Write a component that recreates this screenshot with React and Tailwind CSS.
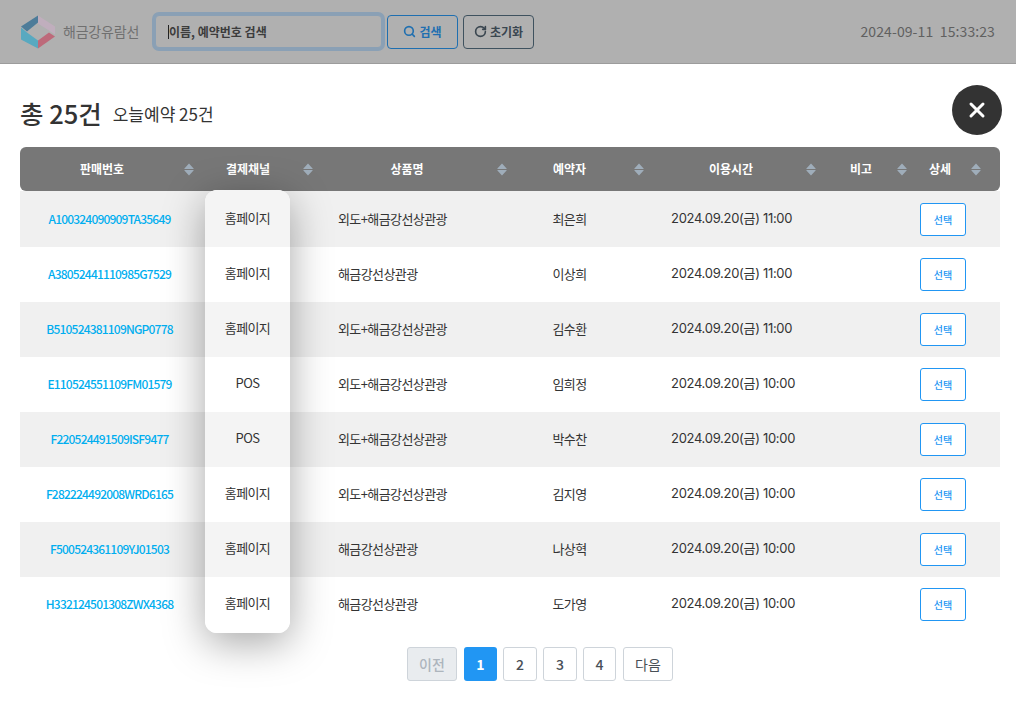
import React from "react";
import { X, Search, RotateCw } from "lucide-react";

const rows = [
  { no: "A100324090909TA35649", channel: "홈페이지", product: "외도+해금강선상관광", name: "최은희", time: "2024.09.20(금) 11:00" },
  { no: "A38052441110985G7529", channel: "홈페이지", product: "해금강선상관광", name: "이상희", time: "2024.09.20(금) 11:00" },
  { no: "B510524381109NGP0778", channel: "홈페이지", product: "외도+해금강선상관광", name: "김수환", time: "2024.09.20(금) 11:00" },
  { no: "E110524551109FM01579", channel: "POS", product: "외도+해금강선상관광", name: "임희정", time: "2024.09.20(금) 10:00" },
  { no: "F220524491509ISF9477", channel: "POS", product: "외도+해금강선상관광", name: "박수찬", time: "2024.09.20(금) 10:00" },
  { no: "F282224492008WRD6165", channel: "홈페이지", product: "외도+해금강선상관광", name: "김지영", time: "2024.09.20(금) 10:00" },
  { no: "F500524361109YJ01503", channel: "홈페이지", product: "해금강선상관광", name: "나상혁", time: "2024.09.20(금) 10:00" },
  { no: "H332124501308ZWX4368", channel: "홈페이지", product: "해금강선상관광", name: "도가영", time: "2024.09.20(금) 10:00" },
];

const SortIcon = () => (
  <svg width="10" height="13" viewBox="0 0 10 13" className="shrink-0">
    <path d="M5 0.5L9.6 5.4a0.3 0.3 0 0 1-0.2 0.5H0.6a0.3 0.3 0 0 1-0.2-0.5Z" fill="#9fadba" />
    <path d="M5 12.5L0.4 7.6a0.3 0.3 0 0 1 0.2-0.5H9.4a0.3 0.3 0 0 1 0.2 0.5Z" fill="#9fadba" />
  </svg>
);

const Logo = () => (
  <svg width="34" height="34" viewBox="0 0 34 33">
    <path d="M17 0L0 11L6 16L17 7Z" fill="#4d7c99" />
    <path d="M17 0L34 11V19L28 15L17 8Z" fill="#c0aebd" />
    <path d="M0 12V24L17 33V25L6 17Z" fill="#58a9c0" />
    <path d="M17 33L34 21L28 17L17 25Z" fill="#bd6a7a" />
  </svg>
);

const HeaderCell = ({ label, className, labelClass = "" }) => (
  <div className={`flex items-center pr-[4px] ${className}`}>
    <span className={`flex-1 text-center ${labelClass}`}>{label}</span>
    <SortIcon />
  </div>
);

export default function App() {
  return (
    <div className="w-[1016px] h-[720px] overflow-hidden bg-white font-['Noto_Sans_CJK_KR',sans-serif] text-[#333]">
      {/* dimmed top bar */}
      <div className="h-[64px] bg-[#b0b0b0] border-b border-[#9c9c9c] flex items-center pl-[21px] pr-[21px]">
        <Logo />
        <span className="ml-[8px] w-[83px] text-[14px] tracking-[-0.2px] text-[#707070] whitespace-nowrap">해금강유람선</span>
        <div className="ml-[9px] w-[227px] h-[33px] rounded bg-[#b0b0b0] border border-[#8aa0b5] ring-[3px] ring-[#8aa0b5] flex items-center pl-[12px] text-[12px] font-semibold text-[#3c3c3c]">
          <span className="w-px h-[14px] bg-[#222]" />
          이름, 예약번호 검색
        </div>
        <button className="ml-[5px] w-[71px] h-[34px] rounded border border-[#1f6fb0] text-[#1f6fb0] text-[12px] font-bold flex items-center justify-center gap-[3px]">
          <Search size={13} strokeWidth={3} />
          검색
        </button>
        <button className="ml-[5px] w-[71px] h-[34px] rounded border border-[#3f525f] text-[#3a4650] text-[12px] font-bold flex items-center justify-center gap-[3px]">
          <RotateCw size={13} strokeWidth={3} />
          초기화
        </button>
        <span className="ml-auto text-[14px] tracking-[0.1px] text-[#606060] whitespace-pre">2024-09-11  15:33:23</span>
      </div>

      {/* modal body */}
      <div className="pl-[20px] pr-[16px] relative">
        <div className="h-[83px] flex items-center pt-[15px]">
          <span className="text-[25.5px] font-medium text-[#333]">총 25건</span>
          <span className="ml-[11px] mt-[2px] text-[17px] text-[#333]">오늘예약 25건</span>
        </div>
        <button className="absolute right-[14px] top-[21px] w-[50px] h-[50px] rounded-full bg-[#333] text-white flex items-center justify-center">
          <X size={24} strokeWidth={3} />
        </button>

        <div className="relative">
          <div className="h-[44px] rounded-md bg-[#777] text-white text-[12px] font-bold flex items-center">
            <HeaderCell label="판매번호" className="w-[178px]" />
            <HeaderCell label="결제채널" className="w-[119px]" labelClass="pr-[5px]" />
            <HeaderCell label="상품명" className="w-[194px]" />
            <HeaderCell label="예약자" className="w-[137px]" labelClass="pr-[6px]" />
            <HeaderCell label="이용시간" className="w-[172px]" labelClass="pl-[8px]" />
            <HeaderCell label="비고" className="w-[91px]" labelClass="pl-[5px]" />
            <HeaderCell label="상세" className="w-[74px]" labelClass="pr-[2px]" />
          </div>

          {rows.map((row, i) => (
            <div
              key={row.no}
              className={`flex items-center text-[13px] tracking-[-0.6px] ${i === 0 ? "h-[56px] pb-px" : "h-[55px] pb-[2px]"} ${i % 2 === 0 ? "bg-[#f0f0f0]" : "bg-white"}`}
            >
              <div className="w-[179px] text-center text-[12px] text-[#00aeef] font-medium tracking-[-0.8px]">{row.no}</div>
              <div className="w-[139px]" />
              <div className="w-[194px]">{row.product}</div>
              <div className="w-[75px] text-center">{row.name}</div>
              <div className="w-[313px] pl-[64px] font-['Inter','Noto_Sans_CJK_KR',sans-serif] tracking-[-0.3px] whitespace-nowrap">{row.time}</div>
              <button className="mt-[2px] w-[46px] h-[33px] rounded-[3px] border border-[#2196f3] text-[#2196f3] text-[10px] font-medium tracking-normal bg-white">선택</button>
            </div>
          ))}

          {/* raised column card */}
          <div className="absolute left-[185px] top-[43px] w-[85px] rounded-xl bg-white overflow-hidden shadow-[0_10px_40px_rgba(0,0,0,0.35)]">
            {rows.map((row, i) => (
              <div
                key={row.no}
                className={`flex items-center justify-center text-[13px] tracking-[-0.6px] ${i === 0 ? "h-[57px] pb-[2px]" : i === 7 ? "h-[56px] pb-[5px]" : "h-[55px] pb-[4px]"} ${i % 2 === 0 ? "bg-[#f4f4f4]" : "bg-white"}`}
              >
                {row.channel}
              </div>
            ))}
          </div>
        </div>

        <div className="mt-[15px] pl-[64px] pr-[4px] flex justify-center gap-[6px] text-[14px]">
          <span className="w-[50px] h-[34px] mr-px rounded-[3px] border border-[#ced4da] bg-[#e9ecef] text-[#adb5bd] font-medium flex items-center justify-center">이전</span>
          <span className="w-[33px] h-[34px] rounded-[3px] bg-[#2196f3] text-white font-bold flex items-center justify-center">1</span>
          <span className="w-[34px] h-[34px] rounded-[3px] border border-[#ced4da] text-[#495057] font-medium flex items-center justify-center">2</span>
          <span className="w-[34px] h-[34px] rounded-[3px] border border-[#ced4da] text-[#495057] font-medium flex items-center justify-center">3</span>
          <span className="w-[33px] h-[34px] mr-px rounded-[3px] border border-[#ced4da] text-[#495057] font-medium flex items-center justify-center">4</span>
          <span className="w-[50px] h-[34px] rounded-[3px] border border-[#ced4da] text-[#495057] flex items-center justify-center">다음</span>
        </div>
      </div>
    </div>
  );
}
